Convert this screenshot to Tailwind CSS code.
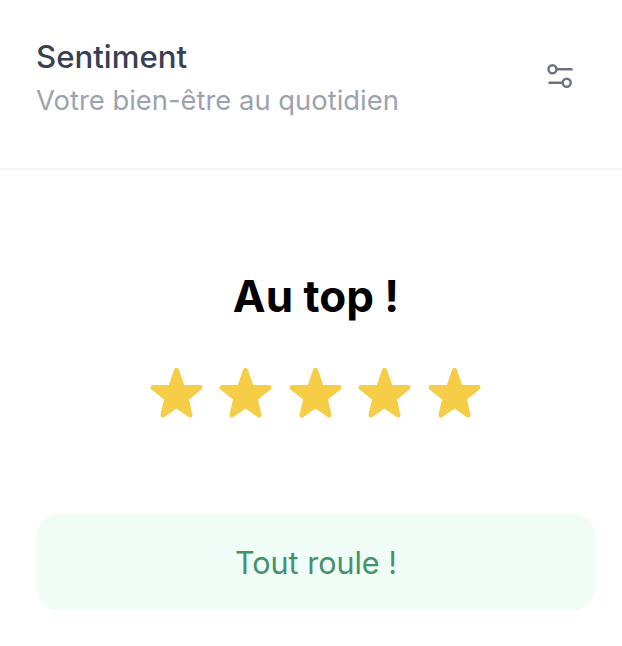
<!DOCTYPE html>
<html lang="fr">
<head>
    <meta charset="UTF-8">
    <title>Sentiment</title>
    <script src="https://cdn.jsdelivr.net/npm/@tailwindcss/browser@4"></script>
</head>
<body class="bg-white font-['Inter',sans-serif] w-[622px] h-[646px] overflow-hidden">
    <!-- Header -->
    <div class="h-[170px] border-b-2 border-[#f3f4f6] pl-9 pr-12 pt-[39px] flex justify-between">
        <div>
            <h2 class="text-[31.2px] leading-9 font-medium text-[#374151]">Sentiment</h2>
            <p class="text-[27.4px] leading-9 mt-[7px] text-[#9ca3af]">Votre bien-être au quotidien</p>
        </div>
        <button class="mt-[23px] w-7 h-7 flex items-center justify-center text-[#6b7280]">
            <svg class="w-7 h-7" viewBox="0 0 28 28" fill="none" stroke="currentColor" stroke-width="2.4" stroke-linecap="round">
                <circle cx="6.5" cy="7.3" r="4"/>
                <path d="M10.5 7.3h15"/>
                <circle cx="20.7" cy="20.7" r="4"/>
                <path d="M3.5 20.7h13.2"/>
            </svg>
        </button>
    </div>

    <!-- Rating -->
    <div class="flex flex-col items-center pt-[100px] pl-9 pr-[26px]">
        <h1 class="text-[44px] leading-[52px] font-bold text-black">Au top !</h1>
        <div class="flex gap-[12.5px] mt-[44px] -ml-[2px]">
            <svg class="w-[57px] h-[56px]" viewBox="0 0 57 56"><path fill="#f5cd47" stroke="#f5cd47" stroke-width="5" stroke-linejoin="round" d="M28.5 4.4 L34.4 21.5 L52 21.5 L38.2 32.5 L42 49 L28.5 39.5 L15 49 L18.8 32.5 L5 21.5 L22.6 21.5 Z"/></svg>
            <svg class="w-[57px] h-[56px]" viewBox="0 0 57 56"><path fill="#f5cd47" stroke="#f5cd47" stroke-width="5" stroke-linejoin="round" d="M28.5 4.4 L34.4 21.5 L52 21.5 L38.2 32.5 L42 49 L28.5 39.5 L15 49 L18.8 32.5 L5 21.5 L22.6 21.5 Z"/></svg>
            <svg class="w-[57px] h-[56px]" viewBox="0 0 57 56"><path fill="#f5cd47" stroke="#f5cd47" stroke-width="5" stroke-linejoin="round" d="M28.5 4.4 L34.4 21.5 L52 21.5 L38.2 32.5 L42 49 L28.5 39.5 L15 49 L18.8 32.5 L5 21.5 L22.6 21.5 Z"/></svg>
            <svg class="w-[57px] h-[56px]" viewBox="0 0 57 56"><path fill="#f5cd47" stroke="#f5cd47" stroke-width="5" stroke-linejoin="round" d="M28.5 4.4 L34.4 21.5 L52 21.5 L38.2 32.5 L42 49 L28.5 39.5 L15 49 L18.8 32.5 L5 21.5 L22.6 21.5 Z"/></svg>
            <svg class="w-[57px] h-[56px]" viewBox="0 0 57 56"><path fill="#f5cd47" stroke="#f5cd47" stroke-width="5" stroke-linejoin="round" d="M28.5 4.4 L34.4 21.5 L52 21.5 L38.2 32.5 L42 49 L28.5 39.5 L15 49 L18.8 32.5 L5 21.5 L22.6 21.5 Z"/></svg>
        </div>
    </div>

    <!-- Status -->
    <div class="ml-9 mr-[26px] mt-[92px] h-24 pt-[2px] rounded-3xl bg-[#f0fdf7] flex items-center justify-center">
        <span class="text-[30.5px] text-[#44916c]">Tout roule !</span>
    </div>
</body>
</html>
